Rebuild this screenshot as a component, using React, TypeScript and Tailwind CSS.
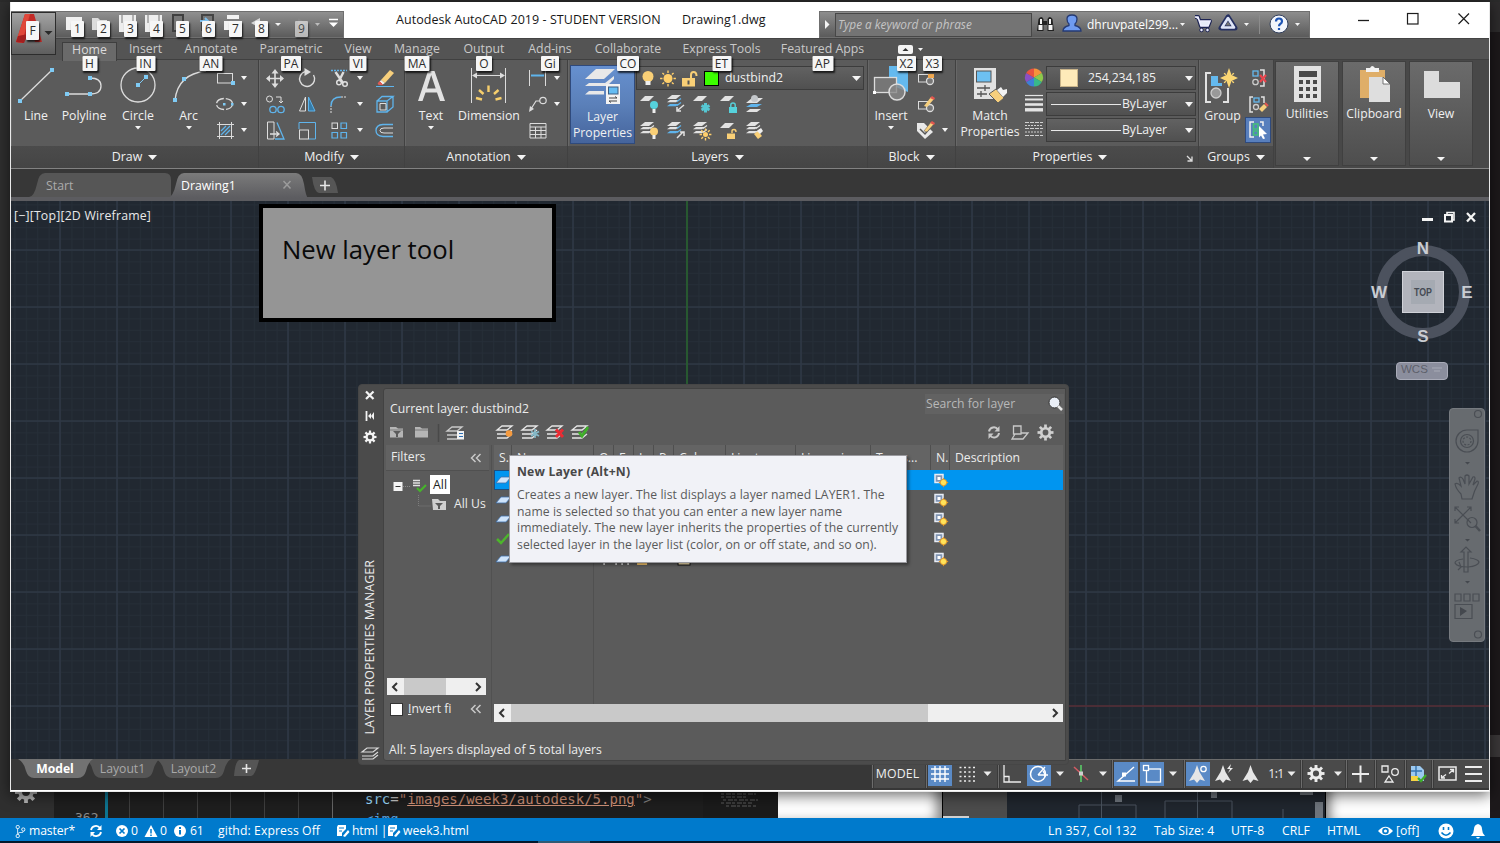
import React from "react";
import { VscSourceControl } from "react-icons/vsc";

type Kids = { children?: React.ReactNode };

/* Drawing area; `b` is the viewBox and also sets the rendered size. */
function Art({ b, className = "", children }: Kids & { b: string; className?: string }) {
  const [, , w, h] = b.split(" ");
  return (
    <svg viewBox={b} width={w} height={h} fill="none" className={"block shrink-0 " + className}>
      {children}
    </svg>
  );
}

function Caret({ w = 10, h = 5, fill = "#f4f4f4", className = "" }: { w?: number; h?: number; fill?: string; className?: string }) {
  return (
    <svg width={w} height={h} viewBox="0 0 10 5" preserveAspectRatio="none" className={"block shrink-0 " + className}>
      <path d="M0 0H10L5 5Z" fill={fill} />
    </svg>
  );
}

function CaretCell({ w = "w-[14px]" }: { w?: string }) {
  return (
    <span className={"flex h-[26px] shrink-0 items-center justify-center " + w}>
      <Caret w={6} h={4} />
    </span>
  );
}

function Key({ children, className = "" }: Kids & { className?: string }) {
  return (
    <span
      className={
        "absolute z-20 flex items-center justify-center rounded-[1px] bg-[#f6f6f6] text-[12px] leading-none text-[#2c2c2c] shadow-[1px_2px_2px_rgba(0,0,0,0.75)] " +
        className
      }
    >
      {children}
    </span>
  );
}

const sheet = (x: number, y: number, w = 9, s = 5, h = 5) => `M${x + s} ${y}h${w}l${-s} ${h}h${-w}z`;
const edge = (x: number, y: number, w = 9, s = 5, h = 5) => `M${x} ${y + h}h${w}l${s} ${-h}`;

function Stack({ x, y, low = "#e2e2e2" }: { x: number; y: number; low?: string }) {
  return (
    <g>
      <path d={sheet(x, y, 9, 5, 4)} fill="#e2e2e2" />
      <path d={sheet(x, y + 5, 9, 3, 2.3)} fill="#e2e2e2" />
      <path d={sheet(x, y + 9, 9, 3, 2.3)} fill={low} />
      <path d={`M${x + 10} ${y + 6.500}l4 -3M${x + 10} ${y + 10.500}l4 -3`} stroke={low} strokeWidth="1.2" />
    </g>
  );
}

function Sun({ x, y, r = 3.5, fill = "#ffcf6b" }: { x: number; y: number; r?: number; fill?: string }) {
  const a = r + 1;
  const c = r + 3.4;
  const k = 0.707;
  return (
    <g>
      <circle cx={x} cy={y} r={r} fill={fill} />
      <path
        stroke={fill}
        strokeWidth="1.4"
        d={`M${x} ${y - a}V${y - c}M${x} ${y + a}V${y + c}M${x - a} ${y}H${x - c}M${x + a} ${y}H${x + c}M${x - a * k} ${y - a * k}L${x - c * k} ${y - c * k}M${x + a * k} ${y - a * k}L${x + c * k} ${y - c * k}M${x - a * k} ${y + a * k}L${x - c * k} ${y + c * k}M${x + a * k} ${y + a * k}L${x + c * k} ${y + c * k}`}
      />
    </g>
  );
}

function Gear({ x, y, r, fill, hole }: { x: number; y: number; r: number; fill: string; hole: string }) {
  return (
    <g>
      <circle cx={x} cy={y} r={r * 0.7} fill={fill} />
      {[0, 45, 90, 135].map((d) => (
        <rect key={d} x={x - r * 0.17} y={y - r} width={r * 0.34} height={r * 2} fill={fill} transform={`rotate(${d} ${x} ${y})`} />
      ))}
      <circle cx={x} cy={y} r={r * 0.36} fill={hole} />
    </g>
  );
}

function Sq({ x, y }: { x: number; y: number }) {
  return <rect x={x - 2} y={y - 2} width="4" height="4" fill="#7fcbf5" />;
}

function Big({ b, label, caret = false, children }: Kids & { b: string; label: string; caret?: boolean }) {
  return (
    <div className="flex shrink-0 flex-col items-center">
      <Art b={b}>{children}</Art>
      <span className="-mx-3 h-[18px] text-[12.3px] leading-[19px] whitespace-nowrap">{label}</span>
      {caret && <Caret w={6} h={3.5} className="mt-[2px]" />}
    </div>
  );
}

function Panel({ w, title, corner = false, pad = "", inset = "pl-px", children }: Kids & { w: string; title: string; corner?: boolean; pad?: string; inset?: string }) {
  return (
    <section className={"flex shrink-0 flex-col border-r border-[#414141] shadow-[inset_1px_0_0_#676767] " + w}>
      <div className={"flex h-[86px] " + inset}>{children}</div>
      <div className={"relative flex h-[22px] items-center justify-center gap-[6px] bg-linear-to-b from-[#4b4b4b] to-[#454545] text-[12.4px] " + pad}>
        <span className="pt-px">{title}</span>
        <Caret w={9} h={5} />
        {corner && (
          <span className="absolute right-[5px] bottom-[6px]">
            <Art b="0 0 7 7">
              <path d="M1 1L5.5 5.5M6 1.5V6H1.5" stroke="#ddd" strokeWidth="1.3" />
            </Art>
          </span>
        )}
      </div>
    </section>
  );
}

function Collapsed({ label, children }: Kids & { label: string }) {
  return (
    <div className="mr-[3px] flex h-[105px] w-[64px] shrink-0 flex-col items-center border border-[#404040] bg-linear-to-b from-[#6b6b6b] to-[#4e4e4e]">
      {children}
      <span className="h-[18px] text-[12.2px] leading-[18px] whitespace-nowrap">{label}</span>
      <Caret w={8} h={4} className="mt-[34px]" />
    </div>
  );
}

const combo = "flex h-[24px] items-center border border-[#3c3c3c] bg-linear-to-b from-[#626262] to-[#505050]";

function TitleBar() {
  return (
    <header className="flex h-[36px] shrink-0 bg-white">
      <div className="mt-[9px] flex h-[27px] w-[333px] shrink-0 border border-[#6f6f6f] bg-linear-to-b from-[#909090] to-[#5c5c5c] pl-[50px]">
        <Art b="62 13 26 25"><path d="M66 18H82V31H66Z" fill="#f0f0f0" /></Art>
        <Art b="88 13 26 25"><path d="M92 19h6l2 2h7v10H92Z" fill="#dcdcdc" /></Art>
        <Art b="114 13 26 25"><path d="M119 16H136V33H119Z" fill="#ededed" /><path d="M122 16V24M133 16V24" stroke="#777" /></Art>
        <Art b="140 13 26 25"><path d="M145 16H162V33H145Z" fill="#ededed" /><path d="M148 16V24M159 16V24" stroke="#777" /></Art>
        <Art b="166 13 27 25"><path d="M173 16H183V32H173Z" fill="#777" stroke="#3f3f3f" strokeWidth="2" /></Art>
        <Art b="193 13 26 25"><path d="M202 16H213V31H202Z" fill="#777" stroke="#444" strokeWidth="2" /><path d="M200 22H208M205 19L208 22L205 25" stroke="#7dbfec" strokeWidth="2" /></Art>
        <Art b="219 13 26 25"><path d="M224 22H242V31H224ZM227 16H239V20H227Z" fill="#f2f2f2" /></Art>
        <Art b="245 13 26 25"><path d="M251 24L260 19V29Z" fill="#d8d8d8" /><path d="M259 24H264" stroke="#d8d8d8" strokeWidth="3" /></Art>
        <span className="flex w-[14px] items-center justify-center"><Caret w={6} h={3} /></span>
        <Art b="285 13 26 25"><path d="M306 24L298 19V29Z" fill="#858585" /></Art>
        <span className="flex w-[13px] items-center justify-center"><Caret w={5} h={3} fill="#bdbdbd" /></span>
        <Art b="324 13 18 25"><path d="M329 20.5H338" stroke="#fff" strokeWidth="1.5" /><path d="M329 23.5H338L333.5 28Z" fill="#fff" /></Art>
      </div>
      <div className="flex h-[36px] w-[475px] shrink-0 items-center pl-[52px] text-[12.5px] tracking-[0.05px] whitespace-pre text-[#171717]">
        <span className="w-[286px]">Autodesk AutoCAD 2019 - STUDENT VERSION</span>
        <span>Drawing1.dwg</span>
      </div>
      <div className="mt-[9px] flex h-[27px] w-[491px] shrink-0 items-center border border-[#6f6f6f] bg-linear-to-b from-[#8d8d8d] to-[#5b5b5b] text-[12px] text-white">
        <Art b="0 0 15 25"><path d="M5 8L9.500 12.500L5 17Z" fill="#f4f4f4" /></Art>
        <div className="flex h-[24px] w-[197px] items-center border border-[#474747] bg-[#747474] pl-[2px] text-[11.8px] text-[#c5c5c5] italic">
          Type a keyword or phrase
        </div>
        <Art b="1032 13 28 25">
          <path d="M1037 32l1.500-12q3-4 5 0v12zM1054 32l-1.500-12q-3-4-5 0v12zM1043 22h5v4h-5z" fill="#222" />
          <path d="M1038.500 26h4v5h-4zM1048.500 26h4v5h-4zM1040 20h2v5h-2zM1049 20h2v5h-2z" fill="#f2f2f2" />
        </Art>
        <Art b="1060 13 26 25">
          <path d="M1063 32q0-4 6-5.500v-1.500q-2-2-2-5q0-4 5-4t5 4q0 3-2 5v1.500q6 1.500 6 5.500z" fill="#6f9bf0" stroke="#253a73" strokeWidth="1.3" />
        </Art>
        <span className="w-[91px] pt-px pl-px">dhruvpatel299...</span>
        <span className="flex w-[11px] justify-center"><Caret w={5} h={3} /></span>
        <Art b="1192 13 28 25">
          <path d="M1199 18h3l3 9h7l2-5h-10" stroke="#1d2453" strokeWidth="4" strokeLinejoin="round" />
          <path d="M1199 18h3l3 9h7l2-5h-10" fill="#e6ebf7" stroke="#eef" strokeWidth="1.700" />
          <circle cx="1205.500" cy="31" r="1.800" fill="#eef" stroke="#1d2453" /><circle cx="1211.500" cy="31" r="1.800" fill="#eef" stroke="#1d2453" />
        </Art>
        <Art b="1220 13 24 25">
          <path d="M1232 18L1225 29H1239Z" stroke="#242f60" strokeWidth="5" strokeLinejoin="round" />
          <path d="M1232 19L1226 28.500H1238Z" stroke="#dfe5f7" strokeWidth="2.600" strokeLinejoin="round" />
        </Art>
        <span className="flex w-[12px] justify-center"><Caret w={5} h={3} /></span>
        <span className="mr-[9px] ml-[7px] h-[19px] w-px bg-[#8c8c8c]" />
        <Art b="1273 13 22 25">
          <circle cx="1283" cy="25" r="9" fill="#f2f5fb" stroke="#33415e" strokeWidth="1" />
          <path d="M1280 22.500q0-3 3-3t3 2.700q0 1.600-1.500 2.500t-1.500 2.500M1283 29v2" stroke="#1f55b5" strokeWidth="2.200" />
        </Art>
        <span className="flex w-[13px] justify-center"><Caret w={5} h={3} /></span>
      </div>
      <div className="flex h-[34px] flex-1 items-center pl-[27px]">
        <Art b="0 0 50 34"><path d="M21 18.500H32" stroke="#1d1d1d" strokeWidth="1.300" /></Art>
        <Art b="0 0 50 34"><rect x="20.500" y="11.500" width="10.500" height="10.500" stroke="#1d1d1d" strokeWidth="1.200" /></Art>
        <Art b="0 0 50 34"><path d="M21.500 11.500L32 22M32 11.500L21.500 22" stroke="#1d1d1d" strokeWidth="1.200" /></Art>
      </div>
    </header>
  );
}

const tabs: [string, string, string, string][] = [
  ["Home", "w-[55px]", "H", "w-[15px]"],
  ["Insert", "w-[57px]", "IN", "w-[19px]"],
  ["Annotate", "w-[74px]", "AN", "w-[23px]"],
  ["Parametric", "w-[86px]", "PA", "w-[20px]"],
  ["View", "w-[48px]", "VI", "w-[17px]"],
  ["Manage", "w-[70px]", "MA", "w-[25px]"],
  ["Output", "w-[64px]", "O", "w-[16px]"],
  ["Add-ins", "w-[68px]", "Gi", "w-[18px]"],
  ["Collaborate", "w-[88px]", "CO", "w-[22px]"],
  ["Express Tools", "w-[99px]", "ET", "w-[19px]"],
  ["Featured Apps", "w-[103px]", "AP", "w-[21px]"],
];

function RibbonTabs() {
  return (
    <nav className="flex h-[22px] shrink-0 border-t border-[#444] bg-[#545454] pl-[51px] text-[12.3px] text-[#c9c9c9]">
      {tabs.map(([name, w, key, kw], i) => (
        <div
          key={name}
          className={
            "relative flex shrink-0 items-center justify-center whitespace-nowrap " +
            w +
            (i === 0 ? " mt-[3px] h-[19px] border border-b-0 border-[#3e3e3e] bg-[#6a6a6a] pb-[4px] text-[#dadada]" : " border-b border-[#404040] pt-px")
          }
        >
          {name}
          <Key className={(i === 0 ? "top-[13px]" : "top-[17px]") + " left-1/2 h-[15px] -translate-x-1/2 " + kw}>{key}</Key>
        </div>
      ))}
      <div className="relative flex flex-1 items-center border-b border-[#404040] pl-[24px]">
        <Art b="0 0 15 9"><rect width="15" height="9" rx="2" fill="#f4f4f4" /><path d="M4.500 6H10.500L7.500 3Z" fill="#333" /></Art>
        <Caret w={5} h={3} className="ml-[5px]" />
        <Key className="top-[17px] left-[23px] h-[15px] w-[19px]">X2</Key>
        <Key className="top-[17px] left-[49px] h-[15px] w-[19px]">X3</Key>
      </div>
    </nav>
  );
}

function DrawPanel() {
  return (
    <Panel w="w-[248px]" title="Draw" inset="">
      <Big b="11 60 50 46" label="Line"><path d="M20 101L52 70" stroke="#dcdcdc" strokeWidth="1.300" /><Sq x={20} y={101} /><Sq x={52} y={70} /></Big>
      <Big b="61 60 46 46" label="Polyline"><path d="M67 94H90Q101 94 101 86Q101 78 90 78" stroke="#dcdcdc" strokeWidth="1.300" /><Sq x={67} y={94} /><Sq x={90} y={94} /><Sq x={90} y={78} /></Big>
      <Big b="107 60 62 46" label="Circle" caret><circle cx="138" cy="85" r="17" stroke="#dcdcdc" strokeWidth="1.300" /><path d="M138 85L146 77" stroke="#7fcbf5" /><Sq x={138} y={85} /><Sq x={146} y={77} /></Big>
      <Big b="169 60 39 46" label="Arc" caret><path d="M175 100Q178 74 206 71" stroke="#dcdcdc" strokeWidth="1.300" /><Sq x={175} y={100} /><Sq x={184} y={79} /></Big>
      <div className="ml-[4px] grid h-[83px] grid-cols-[26px_12px] content-start pt-[5px]">
        <Art b="212 65 26 26"><rect x="217.500" y="73.500" width="15" height="9.500" stroke="#dcdcdc" /><Sq x={233} y={83} /></Art><CaretCell w="w-[12px]" />
        <Art b="212 91 26 26"><ellipse cx="224.500" cy="104" rx="8" ry="5.500" stroke="#dcdcdc" strokeWidth="1.300" strokeDasharray="9 2" /><rect x="223" y="103" width="2.500" height="2.500" fill="#7fcbf5" /><rect x="231" y="103" width="2.500" height="2.500" fill="#7fcbf5" /></Art><CaretCell w="w-[12px]" />
        <Art b="212 117 26 26"><path d="M219.500 122V139M231.500 122V139M217 124.500H234M217 136.500H234" stroke="#dcdcdc" /><path d="M221 131L226 126M221 135L230 126M225 135L230 130" stroke="#5fb4ec" strokeWidth="1.300" /></Art><CaretCell w="w-[12px]" />
      </div>
    </Panel>
  );
}

function ModifyPanel() {
  const w = "#dedede";
  const bl = "#5fb4ec";
  return (
    <Panel w="w-[146px]" title="Modify" inset="">
      <div className="grid h-[83px] grid-cols-[32px_33px_29px_13px_28px] content-start pt-[5px]">
        <Art b="259 65 32 26"><path d="M275 71V86M267.500 78.500H282.500" stroke={w} strokeWidth="1.600" /><path d="M271.500 73.500L275 69L278.500 73.500ZM271.500 83.500L275 88L278.500 83.500ZM270 75L266 78.500L270 82ZM280 75L284 78.500L280 82Z" fill={w} /></Art>
        <Art b="291 65 33 26"><path d="M313.500 75A7.500 7.500 0 1 1 305 71.700" stroke={w} strokeWidth="1.400" /><path d="M304.500 68L311 72L304.500 76Z" fill={w} /></Art>
        <Art b="324 65 29 26"><path d="M331 70.500H347" stroke={bl} strokeDasharray="2 1" strokeWidth="1.300" /><path d="M335.500 72L343 83M343.500 72L339 81" stroke={w} strokeWidth="2.400" /><circle cx="339" cy="82.500" r="2.300" stroke={w} strokeWidth="1.500" /><circle cx="345" cy="84" r="2.300" stroke={w} strokeWidth="1.500" /></Art>
        <CaretCell w="w-[13px]" />
        <Art b="366 65 32 26"><path d="M376 86.500H394" stroke={bl} /><path d="M381 80L390 70L394 73L385 83Z" fill="#f7cf7c" /><path d="M381 80L385 83L382 85L378 84Z" fill="#f3efe9" /><path d="M378 84l1.500-2.500 3 3z" fill="#e25750" stroke="#e25750" /></Art>

        <Art b="259 91 32 26"><circle cx="269.500" cy="99" r="3" stroke={w} /><circle cx="273" cy="109.500" r="3.200" stroke={bl} strokeWidth="1.300" /><circle cx="281" cy="109.500" r="3.200" stroke={bl} strokeWidth="1.300" /><path d="M276 97H281V102M279 101L281 103L283 101" stroke={w} /></Art>
        <Art b="291 91 33 26"><path d="M305.500 97V111H299.500Z" stroke={w} /><path d="M308.500 97V111H315Z" fill="#367ca8" stroke={bl} /></Art>
        <Art b="324 91 29 26"><path d="M331 113V106" stroke={w} strokeDasharray="2 1" /><path d="M331 106Q331 97 341 97" stroke={bl} strokeWidth="1.400" /><path d="M341 97H347" stroke={w} strokeDasharray="2 1" /></Art>
        <CaretCell w="w-[13px]" />
        <Art b="366 91 32 26"><path d="M377 101H387V112H377ZM377 101L382 96.500H393L387 101M393 96.500V107L387 112" stroke={bl} strokeWidth="1.300" /><path d="M380 103.500H386V110H380Z" stroke={w} /></Art>

        <Art b="259 117 32 26"><path d="M267.500 122H274V139H267.500Z" stroke={w} /><path d="M277 122.500L284 139H275" stroke={bl} strokeWidth="1.300" /><path d="M270 134H278M276 131.500L279 134L276 136.500" stroke={w} strokeWidth="1.300" /></Art>
        <Art b="291 117 33 26"><path d="M299 129V122.500H315.500V139H309" stroke={bl} /><rect x="299.500" y="130" width="9" height="9" stroke={w} /></Art>
        <Art b="324 117 29 26"><rect x="332" y="123" width="5.500" height="5.500" stroke={w} /><path d="M341 123H346.500V128.500H341ZM332 132.500H337.500V138H332ZM341 132.500H346.500V138H341Z" stroke={bl} strokeWidth="1.200" /></Art>
        <CaretCell w="w-[13px]" />
        <Art b="366 117 32 26"><path d="M393 124.500H383Q376 125 376 130.500Q376 136 383 136.500H393" stroke={bl} strokeWidth="1.300" /><path d="M393 128H384Q380 128 380 130.500Q380 133 384 133H393" stroke={w} /></Art>
      </div>
    </Panel>
  );
}

function AnnotationPanel() {
  return (
    <Panel w="w-[163px]" title="Annotation">
      <Big b="406 60 50 46" label="Text" caret><path d="M418 101L428 71H434.500L445 101H440L437 92.500H425.500L422.500 101ZM427 88.500H435.700L431.200 75Z" fill="#e2e2e2" fillRule="evenodd" /></Big>
      <Big b="456 60 66 46" label="Dimension">
        <path d="M471.500 68V103M505.500 68V103M473 75.500H504" stroke="#dcdcdc" /><path d="M472 75.500L477 72.500V78.500ZM505 75.500L500 72.500V78.500Z" fill="#dcdcdc" />
        <path d="M476 98L482 99.500M479 90L483.500 94M488.500 85.500V92M498.500 90L494 94M501.500 98L495.500 99.500" stroke="#f7cf6c" strokeWidth="2.400" />
      </Big>
      <div className="ml-[3px] grid grid-cols-[26px_12px] content-start pt-[5px]">
        <Art b="525 65 26 26"><path d="M529.500 70V86M545.500 70V86" stroke="#dcdcdc" /><path d="M531 75.500H544" stroke="#5fb4ec" strokeWidth="2" /></Art><CaretCell w="w-[12px]" />
        <Art b="525 91 26 26"><circle cx="543" cy="100.500" r="3.200" stroke="#dcdcdc" strokeWidth="1.200" /><path d="M540 101H536L531 109" stroke="#dcdcdc" strokeWidth="1.200" /><path d="M529 112L530 106L534 109Z" fill="#dcdcdc" /></Art><CaretCell w="w-[12px]" />
        <Art b="525 117 26 26"><path d="M530 123.500H546V138H530ZM530 127H546M530 130.500H546M530 134.500H546M535.500 127V138M541 127V138" stroke="#dcdcdc" /></Art>
      </div>
    </Panel>
  );
}

function Lock({ x, y, fill }: { x: number; y: number; fill: string }) {
  return (
    <g>
      <rect x={x} y={y} width="8" height="6" fill={fill} />
      <path d={`M${x + 1.800} ${y}V${y - 2}q0-2 2.200-2t2.200 2V${y}`} stroke={fill} strokeWidth="1.400" />
    </g>
  );
}

function LayersPanel() {
  return (
    <Panel w="w-[300px]" title="Layers">
      <div className="mt-[5px] ml-px flex h-[79px] w-[65px] shrink-0 flex-col items-center border border-[#2f4a7c] bg-linear-to-b from-[#6690cf] via-[#5b80b9] to-[#45649c] text-[12.2px]">
        <Art b="570 65 64 42">
          <path d={sheet(584, 68, 19, 11, 10)} fill="#e8e8e8" />
          <path d="M588 82H604L613 75V78L606 85H584ZM588 90H603V93.500H584Z" fill="#e8e8e8" />
          <rect x="605" y="83" width="14" height="20" fill="#f2f2f2" /><rect x="607.500" y="86" width="9.500" height="7" fill="#64bcf2" stroke="#3c5b7e" />
          <path d="M608 97H616M614 95.500L616 97M616 100H608M610 101.500L608 100" stroke="#444" />
        </Art>
        <span className="h-[16px] leading-[17px]">Layer</span>
        <span className="h-[17px] leading-[17px]">Properties</span>
      </div>
      <div className="ml-px flex flex-col pt-[6px]">
        <div className={combo + " w-[228px] pr-[2px]"}>
          <Art b="638 66 72 23">
            <circle cx="649" cy="75.500" r="5.500" fill="#f9cf76" /><path d="M646.500 80H651.500V84H646.500Z" fill="#eee" />
            <Sun x={669} y={77.500} r={4.500} />
            <path d="M683 77H696V85.500H683Z" fill="#f9cf76" /><path d="M692 78V74Q692 71 694.500 71Q697.500 71 697.500 75" stroke="#f9cf76" strokeWidth="2" /><path d="M688.500 79.500H690.500V83.500H688.500Z" fill="#555" />
          </Art>
          <span className="-ml-[5px] size-[15px] border border-black bg-[#3cff00]" />
          <span className="ml-[6px] flex-1 text-[12.3px]">dustbind2</span>
          <Caret w={9} h={5} />
        </div>
        <div className="grid grid-cols-[26px_27px_26px_26px_26px] pt-[1px]">
          <Art b="636 91 26 26"><path d={sheet(640, 96)} fill="#e2e2e2" /><circle cx="654" cy="105" r="4" fill="#56d2dc" /><path d="M652.500 109H655.500V113H652.500Z" fill="#eee" /></Art>
          <Art b="662 91 27 26"><Stack x={667} y={95} low="#5fb4ec" /><path d="M684 105L678 110M677 107V111H681" stroke="#e2e2e2" strokeWidth="1.500" /></Art>
          <Art b="689 91 26 26"><path d={sheet(693, 96)} fill="#e2e2e2" /><path d="M705.500 103V112.500M701.500 105.500L709.500 110M709.500 105.500L701.500 110" stroke="#56c6d2" strokeWidth="3" /></Art>
          <Art b="715 91 26 26"><path d={sheet(720, 96)} fill="#e2e2e2" /><Lock x={729} y={107} fill="#56d2dc" /></Art>
          <Art b="741 91 26 26"><path d={sheet(746, 98, 11, 6, 5)} fill="#e2e2e2" /><path d={sheet(746, 104, 11, 5, 3)} fill="#5fb4ec" /><path d={sheet(746, 109, 11, 4, 3)} fill="#e2e2e2" /><circle cx="754.500" cy="98.500" r="3.500" fill="#c3c6ca" /></Art>
          <Art b="636 117 26 26"><Stack x={640} y={122} /><circle cx="654" cy="131.500" r="4" fill="#f9cf76" /><path d="M652.500 135H655.500V139H652.500Z" fill="#eee" /></Art>
          <Art b="662 117 27 26"><Stack x={667} y={122} low="#5fb4ec" /><path d="M677 138L683 132M680 132H684V136" stroke="#e2e2e2" strokeWidth="1.500" /></Art>
          <Art b="689 117 26 26"><Stack x={693} y={122} /><Sun x={705.500} y={134.500} r={2.500} /></Art>
          <Art b="715 117 26 26"><path d={sheet(720, 123)} fill="#e2e2e2" /><rect x="727" y="133.500" width="8" height="5.500" fill="#f9cf76" /><path d="M732 133V131Q732 129.500 734 129.500Q736 129.500 736 132" stroke="#f9cf76" strokeWidth="1.400" /></Art>
          <Art b="741 117 26 26"><Stack x={746} y={122} /><path d="M754 134L758 131L762 136L758 139Z" fill="#f9cf76" /><path d="M757 131L761 128L763 131L760 134Z" fill="#eee" /></Art>
        </div>
      </div>
    </Panel>
  );
}

function BlockPanel() {
  const shape = (y: number) => (
    <g><rect x="918.500" y={y} width="10" height="7.500" stroke="#dcdcdc" /><circle cx="930" cy={y + 6.500} r="3.500" stroke="#dcdcdc" strokeWidth="1.300" fill="#777" /></g>
  );
  return (
    <Panel w="w-[88px]" title="Block">
      <Big b="869 60 44 46" label="Insert" caret>
        <path d="M889 66H908V92L898 88L889 80Z" fill="#64b9ee" /><rect x="874.500" y="77.500" width="22" height="15" fill="#767676" stroke="#dcdcdc" strokeWidth="1.300" /><circle cx="897" cy="92" r="8" fill="#8a8a8a" fillOpacity="0.800" stroke="#dcdcdc" strokeWidth="1.500" /><rect x="873" y="91" width="3" height="3" fill="#fff" />
      </Big>
      <div className="grid grid-cols-[26px_12px] content-start pt-[5px]">
        <Art b="913 65 26 26">{shape(74.500)}<path d="M928 74H934V78H928Z" fill="#f0a850" /></Art><span />
        <Art b="913 91 26 26">{shape(101.500)}<path d="M924 106L931 97L934 99L927 107Z" fill="#f7cf7c" /><path d="M930 98L932 96L935 98L934 100Z" fill="#e25750" /></Art><span />
        <Art b="913 117 26 26"><path d="M917 123H924L933 132L925 139L917 131Z" fill="#e8e8e8" /><path d="M920 129L925 134L931 127" stroke="#555" strokeWidth="1.500" /><path d="M924 131L931 122L934 124L927 132Z" fill="#f7cf7c" stroke="#555" strokeWidth="0.500" /><path d="M930 123L932 121L935 123L934 125Z" fill="#e25750" /></Art><CaretCell w="w-[12px]" />
      </div>
    </Panel>
  );
}

function PropertiesPanel() {
  const wheel = ["#f6933b", "#8cc84b", "#38b88a", "#3e7fd6", "#8a4fc4", "#e9533f"];
  return (
    <Panel w="w-[243px]" title="Properties" corner pad="pr-[14px]">
      <div className="flex w-[66px] shrink-0 flex-col items-center text-[12.2px]">
        <Art b="957 60 66 46">
          <rect x="974" y="68" width="22" height="31" fill="#e2e2e2" /><rect x="976.500" y="71" width="14.500" height="11" fill="#6dc0f2" stroke="#555" />
          <path d="M977 88H990M977 94H987M985 85V91M981 91V97" stroke="#555" strokeWidth="1.300" />
          <path d="M989 94L996 89L1004 98L998 103Z" fill="#f7cf7c" stroke="#5b5b5b" /><path d="M997 90L1001 87L1003 90L1007 89V93L1003 97Z" fill="#f2f2f2" />
        </Art>
        <span className="h-[17px] leading-[19px]">Match</span>
        <span className="h-[17px] leading-[17px]">Properties</span>
      </div>
      <div className="grid w-[23px] shrink-0 content-start pt-[6px]">
        <Art b="1023 66 23 25">
          {wheel.map((c, i) => (
            <path key={c} d="M1034 77.500L1034 68.500A9 9 0 0 1 1041.800 73Z" fill={c} transform={`rotate(${i * 60} 1034 77.500)`} />
          ))}
        </Art>
        <Art b="1023 91 23 26"><path d="M1025 95.500H1043" stroke="#e4e4e4" strokeWidth="1.200" /><path d="M1025 99.500H1043" stroke="#e4e4e4" strokeWidth="2" /><path d="M1025 104.500H1043" stroke="#e4e4e4" strokeWidth="2.600" /><path d="M1025 109.800H1043" stroke="#e4e4e4" strokeWidth="3.400" /></Art>
        <Art b="1023 117 23 26"><path d="M1025 122.500H1043M1025 128.500H1043M1025 135.500H1043" stroke="#d0d0d0" strokeDasharray="4 1" strokeWidth="1.200" /><path d="M1025 125.500H1043M1025 132H1043" stroke="#d0d0d0" strokeDasharray="2 1" /></Art>
      </div>
      <div className="grid w-[150px] content-start gap-[2px] pt-[6px] text-[12.2px]">
        <div className={combo + " pr-[2px]"}>
          <span className="ml-[13px] size-[18px] border border-[#c9b48a] bg-[#feeab9]" />
          <span className="ml-[10px] flex-1 tracking-[-0.1px]">254,234,185</span>
          <Caret w={8} h={5} />
        </div>
        {[0, 1].map((i) => (
          <div key={i} className={combo + " pr-[2px]"}>
            <span className="ml-[4px] h-px w-[70px] bg-[#e8e8e8]" />
            <span className="ml-px flex-1">ByLayer</span>
            <Caret w={8} h={5} />
          </div>
        ))}
      </div>
    </Panel>
  );
}

function GroupsPanel() {
  return (
    <Panel w="w-[75px]" title="Groups">
      <Big b="1200 60 45 46" label="Group">
        <path d="M1211 73H1206V102H1211M1223 102H1228V88" stroke="#e2e2e2" strokeWidth="2" /><path d="M1211 76H1218V83H1222V86H1211Z" fill="#64b9ee" /><circle cx="1216" cy="93" r="5" fill="#999" stroke="#ccc" strokeWidth="1.300" />
        <path d="M1229 68L1231.500 75L1238 78L1231.500 81L1229 88L1226.500 81L1220 78L1226.500 75Z" fill="#fbd774" /><Sun x={1229} y={78} r={3.500} fill="#fbd774" />
      </Big>
      <div className="flex flex-col pt-[5px]">
        <Art b="1245 65 27 26"><path d="M1260 70H1264V86H1260" stroke="#e2e2e2" strokeWidth="1.500" /><rect x="1253" y="71" width="5" height="5" stroke="#64b9ee" strokeWidth="1.300" /><circle cx="1255.500" cy="82" r="2.700" stroke="#ccc" strokeWidth="1.300" /><path d="M1260 75L1266 82M1266 75L1260 82" stroke="#e8444c" strokeWidth="2.200" /></Art>
        <Art b="1245 91 27 26"><path d="M1253 97H1250V112H1253M1261 97H1264V103" stroke="#e2e2e2" strokeWidth="1.500" /><rect x="1254" y="98" width="5" height="4" stroke="#64b9ee" strokeWidth="1.300" /><circle cx="1256" cy="107" r="2.500" stroke="#ccc" strokeWidth="1.300" /><path d="M1259 109L1264 104L1267 107L1262 112Z" fill="#f7cf7c" /><path d="M1265 103L1268 106" stroke="#e25750" strokeWidth="2" /></Art>
        <div className="h-[26px] w-[26px] border border-[#2f4a7c] bg-[#587fbd]">
          <Art b="1246 118 24 24"><path d="M1254 122H1250V137H1254M1260 122H1263V126" stroke="#f0f0f0" strokeWidth="1.500" /><path d="M1253.500 124H1258V129H1253.500ZM1253.500 131H1258V135H1253.500Z" stroke="#44c07a" strokeWidth="1.600" /><path d="M1259 126L1267 134L1263 134.500L1265 138.500L1263 139L1261 135.500L1259 137.500Z" fill="#fff" /></Art>
        </div>
      </div>
    </Panel>
  );
}

function Ribbon() {
  return (
    <div className="flex h-[109px] shrink-0 border-b border-[#828282] bg-[#5b5b5b] text-[#f0f0f0]">
      <DrawPanel />
      <ModifyPanel />
      <AnnotationPanel />
      <LayersPanel />
      <BlockPanel />
      <PropertiesPanel />
      <GroupsPanel />
      <div className="flex flex-1 bg-[#484848] pt-[1px] pl-px">
        <Collapsed label="Utilities">
          <Art b="1276 61 62 43"><rect x="1294" y="65" width="27" height="36" fill="#e2e2e2" /><path d="M1299 70H1317V76H1299ZM1299 79h4v4h-4zM1306 79h4v4h-4zM1313 79h4v4h-4zM1299 86h4v4h-4zM1306 86h4v4h-4zM1313 86h4v4h-4zM1299 93h4v4h-4zM1306 93h4v4h-4zM1313 93h4v4h-4z" fill="#4a4a4a" /></Art>
        </Collapsed>
        <Collapsed label="Clipboard">
          <Art b="1343 61 62 43"><path d="M1360 69H1385V97H1360Z" fill="#dfae68" /><path d="M1366 67H1370Q1372 63 1375 67H1379V71H1366Z" fill="#f2f2f2" /><path d="M1369 76H1383L1390 83V101H1369Z" fill="#dedede" /><path d="M1383 76V83H1390Z" fill="#fff" stroke="#555" strokeWidth="0.800" /></Art>
        </Collapsed>
        <Collapsed label="View">
          <Art b="1410 61 62 43"><path d="M1424 70H1439V81H1460V97H1424Z" fill="#dcdcdc" /></Art>
        </Collapsed>
      </div>
    </div>
  );
}

function FileTabs() {
  return (
    <div className="flex h-[32px] shrink-0 border-b-[4px] border-[#5c5c60] bg-[#373737] pl-[18px] text-[12.3px]">
      <div className="relative mt-[3px] h-[25px] w-[142px]">
        <Art b="0 0 142 25" className="absolute inset-0"><path d="M0 25Q5 25 8 12Q10 1 16 1H136Q142 1 142 8V25Z" fill="#565656" /></Art>
        <span className="relative block pt-[5px] pl-[17px] text-[#ababab]">Start</span>
      </div>
      <div className="relative -ml-[3px] mt-[3px] h-[26px] w-[140px]">
        <Art b="0 0 140 26" className="absolute inset-0">
          <defs><linearGradient id="tab" x1="0" y1="0" x2="0" y2="1"><stop offset="0" stopColor="#7b7b7b" /><stop offset="1" stopColor="#5c5c60" /></linearGradient></defs>
          <path d="M0 26Q5 25 8 12Q10 1 16 1H128Q134 1 136 12Q138 25 140 26Z" fill="url(#tab)" />
          <path d="M115.500 9L122.500 16.500M122.500 9L115.500 16.500" stroke="#9c9c9c" strokeWidth="1.500" />
        </Art>
        <span className="relative block pt-[5px] pl-[13px] text-white">Drawing1</span>
      </div>
      <div className="mt-[8px] ml-[4px]">
        <Art b="0 0 26 16"><path d="M0 0H19Q24 2 26 16H7Q2 15 0 0Z" fill="#565656" /><path d="M8 8.500H18M13 3.500V13.500" stroke="#e6e6e6" strokeWidth="1.600" /></Art>
      </div>
    </div>
  );
}

function ViewCube() {
  return (
    <div className="absolute top-[38px] right-[14px]">
      <Art b="1369 239 106 108">
        <circle cx="1423" cy="292" r="41.500" stroke="#4c525e" strokeWidth="11" />
        <rect x="1402.500" y="271.500" width="41" height="41" fill="#b2b4bc" stroke="#d0d2d8" />
        <rect x="1411" y="280" width="24" height="24" fill="#a5aab2" />
        <g fill="#c9ccd2" fontFamily="Liberation Sans, sans-serif" fontWeight="bold" fontSize="17" textAnchor="middle">
          <text x="1423" y="253.500">N</text><text x="1423" y="342">S</text><text x="1379" y="298">W</text><text x="1467" y="298">E</text>
          <text x="1423" y="296" fontSize="10.500" fill="#454b54" textLength="18" lengthAdjust="spacingAndGlyphs">TOP</text>
        </g>
      </Art>
      <div className="mt-[15px] ml-[27px] flex h-[18px] w-[52px] items-center justify-between rounded-[4px] border border-[#a9abb8] bg-[#8b8e9d] pr-[5px] pl-[4px] pb-[2px] font-['Liberation_Sans',sans-serif] text-[11.5px] text-[#5d606b]">
        WCS
        <Art b="0 0 10 6"><path d="M0 1H10M2 4H8" stroke="#a7aab6" /></Art>
      </div>
    </div>
  );
}

function NavBar() {
  return (
    <div className="absolute top-[207px] right-[4px] h-[234px] w-[36px] rounded-[4px] border border-[#777b80] bg-[#676b6f]">
      <Art b="1450 409 34 232">
        <g stroke="#4a4e54" strokeWidth="1.200">
          <circle cx="1478" cy="414" r="3.500" /><circle cx="1478" cy="634.500" r="3.500" />
          <path d="M1467 430H1478V441A11 11 0 1 1 1467 430Z" /><circle cx="1467" cy="441" r="6.500" /><circle cx="1467" cy="441" r="4" strokeDasharray="2 1.500" />
          <path d="M1461 494Q1456 489 1455 484Q1457 482 1461 486L1459 478Q1461 476 1463 479L1465 484L1465 476Q1467 474 1469 476L1469 484L1473 477Q1475 476 1475 479L1473 485L1477 481Q1479 481 1478 484Q1474 491 1472 499H1462Z" />
          <path d="M1455 507L1471 523M1471 507L1455 523M1455 511V507H1459M1467 507H1471V511M1455 519V523H1459" /><circle cx="1472" cy="522.500" r="5" /><path d="M1475.500 526L1480 531" strokeWidth="2.500" />
          <path d="M1464 572V552H1461L1466 547L1471 552H1468V572Z" /><path d="M1463 559Q1455 560 1455 563Q1457 567 1468 567Q1478 566 1479 562Q1478 559 1470 558M1459 562L1461 567L1458 570" />
          <path d="M1455 594h6v7h-6zM1464 594h6v7h-6zM1473 594h6v7h-6zM1455 604.500h17v14h-17z" />
        </g>
        <path d="M1465 462H1470L1467.500 464.500ZM1465 539H1470L1467.500 541.500ZM1465 581H1470L1467.500 583.500ZM1460 607L1467 611L1460 616Z" fill="#44484e" />
      </Art>
    </div>
  );
}

const toolIcon = (x: number, mark: React.ReactNode) => (
  <Art b={`${x} 421 25 24`} key={x}>
    <path d={sheet(x + 5, 426, 10, 5, 4)} stroke="#e6e6e6" strokeWidth="1.300" />
    <path d={edge(x + 5, 430, 10, 5, 4) + edge(x + 5, 434, 10, 5, 4)} stroke="#e6e6e6" strokeWidth="1.300" />
    {mark}
  </Art>
);

const cols: [string, string][] = [
  ["w-[18px] pl-[4px]", "S."],
  ["w-[82px]", "Name"],
  ["w-[20px]", "O."],
  ["w-[20px]", "F.."],
  ["w-[20px]", "L."],
  ["w-[20px]", "P."],
  ["w-[52px]", "Color"],
  ["w-[70px]", "Linetype"],
  ["w-[75px]", "Lineweig..."],
  ["w-[60px]", "Trans..."],
  ["w-[19px]", "N."],
  ["w-[112px] border-r-0", "Description"],
];

function Scroll({ thumb, className }: { thumb: string; className: string }) {
  return (
    <div className={"flex items-center bg-[#efefef] " + className}>
      <Art b="0 0 17 16"><path d="M10 4L6 8L10 12" stroke="#333" strokeWidth="2" /></Art>
      <span className={"h-full bg-[#c9c9c9] " + thumb} />
      <span className="flex-1" />
      <Art b="0 0 17 16"><path d="M7 4L11 8L7 12" stroke="#333" strokeWidth="2" /></Art>
    </div>
  );
}

function Chevrons() {
  return <Art b="0 0 12 10"><path d="M5.500 1L1.500 5L5.500 9M10.500 1L6.500 5L10.500 9" stroke="#c9c9c9" strokeWidth="1.500" /></Art>;
}

function LayerPalette() {
  return (
    <div className="absolute top-[183px] left-[347px] z-30 flex h-[381px] w-[711px] rounded-[4px] border border-[#464646] bg-[#4b4b4b] text-[12.2px] text-[#ececec]">
      <div className="flex w-[24px] shrink-0 flex-col">
        <Art b="359 385 24 64">
          <path d="M366 391.500L373.500 399M373.500 391.500L366 399" stroke="#f4f4f4" strokeWidth="2.200" />
          <path d="M366.500 411V421" stroke="#f4f4f4" strokeWidth="1.800" /><path d="M368 416L371 413V419Z" fill="#f4f4f4" /><path d="M374 412V420L371 416Z" fill="#f4f4f4" />
          <Gear x={370} y={437} r={6.500} fill="#f4f4f4" hole="#4b4b4b" />
        </Art>
        <div className="flex h-[290px] w-[23px] items-center justify-start pt-[111px] [writing-mode:vertical-rl]">
          <span className="-ml-[2px] rotate-180 text-[12.4px] leading-[23px] tracking-[0.08px] whitespace-nowrap">LAYER PROPERTIES MANAGER</span>
        </div>
        <Art b="359 739 24 24"><path d={sheet(362, 748, 11, 5, 4) + edge(362, 752, 11, 5, 4) + edge(362, 755, 11, 5, 4)} stroke="#dcdcdc" strokeWidth="1.200" /></Art>
      </div>
      <div className="my-[3px] mr-[2px] flex flex-1 flex-col rounded-l-[3px] border border-[#424242] bg-[#5b5b5b]">
        <div className="flex h-[32px] shrink-0">
          <span className="flex-1 pt-[11px] pl-[6px] tracking-[0.02px]">Current layer: dustbind2</span>
          <div className="mt-[5px] mr-[1px] flex h-[20px] w-[139px] items-center justify-between bg-[#626262] pl-px text-[#b8b8b8]">
            <span className="pt-px">Search for layer</span>
            <Art b="0 0 16 16"><circle cx="6.500" cy="6.500" r="5.500" fill="#e9eef6" stroke="#333" /><path d="M10 10L14 14" stroke="#e8e8e8" strokeWidth="2.500" /></Art>
          </div>
        </div>
        <div className="flex h-[24px] shrink-0">
          <Art b="384 421 53 24">
            <path d="M390 427h6l2 1.500h5v9h-13z" fill="#b5b5b5" /><path d="M393 431h8l-3 3v3h-2v-3z" fill="#5b5b5b" /><path d="M415 427h5l2 1.500h6v9h-13z" fill="#b5b5b5" /><path d="M390 430H403M415 430H428" stroke="#7a7a7a" />
          </Art>
          <Art b="437 421 55 24">
            <path d="M438.500 424V442" stroke="#494949" strokeWidth="1.500" /><path d={sheet(447, 427, 10, 5, 4)} stroke="#c9c9c9" strokeWidth="1.300" /><path d="M447 435H457M447 439H457" stroke="#c9c9c9" strokeWidth="1.500" /><rect x="457" y="431" width="7" height="8.500" fill="#f1f1f1" /><path d="M459 433.500H463M459 436.500H463" stroke="#2d6fb5" strokeWidth="1.200" />
          </Art>
          {toolIcon(492, <circle cx="509" cy="433.500" r="3.300" fill="#f59a3e" />)}
          {toolIcon(517, <path d="M535 429V438M531 431.500L539 436M539 431.500L531 436" stroke="#84b9c8" strokeWidth="1.600" />)}
          {toolIcon(542, <path d="M556 429.500L563 437M563 429.500L556 437" stroke="#ea2a32" strokeWidth="3" />)}
          {toolIcon(567, <path d="M579 432L582 436L588 427" stroke="#3fae2a" strokeWidth="2.800" />)}
          <span className="flex-1" />
          <Art b="983 421 82 24">
            <path d="M989 431.500A5 5 0 0 1 998 429.500M999 433A5 5 0 0 1 990 435.500" stroke="#c9c9c9" strokeWidth="2" /><path d="M999.500 426V431.500H994.500ZM988.500 439V433.500H993.500Z" fill="#c9c9c9" />
            <path d="M1013.500 426H1021V434H1013.500ZM1021 433H1028L1023 439H1012L1015 434" stroke="#c9c9c9" strokeWidth="1.300" />
            <Gear x={1045.500} y={432.500} r={8} fill="#d0d0d0" hole="#5b5b5b" />
          </Art>
        </div>
        <div className="flex h-[278px] shrink-0 pl-[2px]">
          <div className="flex w-[103px] shrink-0 flex-col">
            <div className="flex h-[25px] shrink-0 items-center justify-between bg-[#626262] pr-[7px] pl-[5px]"><span>Filters</span><Chevrons /></div>
            <div className="flex h-[208px] shrink-0 flex-col overflow-hidden border-t border-[#505050] pt-[2px]">
              <div className="flex h-[22px] items-center">
                <Art b="386 472 44 22">
                  <rect x="393.500" y="481" width="9" height="9" fill="#f4f4f4" /><path d="M395.500 485.500H400.500" stroke="#333" /><path d="M403 485.500H411" stroke="#8a8a8a" strokeDasharray="1 1" />
                  <path d="M413 479.500H420M413 482H420M413 484.500H420" stroke="#e2e2e2" strokeWidth="1.500" /><path d="M417 487L420 490L426 484" stroke="#46b32b" strokeWidth="2.200" />
                </Art>
                <span className="h-[19px] bg-white px-[3px] text-[12.300px] leading-[19px] text-[#222]">All</span>
              </div>
              <div className="flex h-[19px] items-center">
                <Art b="386 494 67 19">
                  <path d="M418.500 494V505H431" stroke="#7d7d7d" strokeDasharray="1 1" /><path d="M432 498h6l2 2h6v9h-13z" fill="#cfcfcf" /><path d="M435 502h8l-3 3v3h-2v-3z" fill="#5b5b5b" />
                </Art>
                <span className="pl-px whitespace-nowrap">All Us</span>
              </div>
            </div>
            <Scroll className="ml-px h-[17px] w-[99px] shrink-0" thumb="w-[42px]" />
            <div className="flex h-[28px] items-center pl-[4px]">
              <span className="size-[13px] border border-[#333] bg-white" />
              <span className="ml-[5px] flex-1"><span className="underline">I</span>nvert fi</span>
              <span className="mr-[7px]"><Chevrons /></span>
            </div>
          </div>
          <div className="ml-[2px] flex w-[572px] flex-col border-l border-[#515151] pl-[2px]">
            <div className="flex h-[25px] shrink-0 bg-[#646464]">
              {cols.map(([w, t]) => (
                <span key={t} className={"flex shrink-0 items-center overflow-hidden border-r border-[#4f4f4f] pt-px pl-[5px] whitespace-nowrap " + w}>
                  {t}
                </span>
              ))}
            </div>
            <div className="flex h-[234px]">
              <div className="flex w-[100px] shrink-0 flex-col border-r border-[#505050]">
                {[0, 1, 2, 3, 4].map((i) => (
                  <div key={i} className={"h-[19.700px] shrink-0 " + (i === 0 ? "bg-[#0095f0] outline outline-1 -outline-offset-1 outline-[#1e4f80]" : "")}>
                    <Art b="0 0 20 19.700">
                      {i === 3 ? <path d="M3 10L7 14L15 5" stroke="#4db52c" strokeWidth="2.500" /> : <path d={sheet(2, 7, 10, 5, 6)} fill="#cfe4fb" stroke="#3f6fa8" strokeWidth="0.800" />}
                    </Art>
                  </div>
                ))}
              </div>
              <div className="flex flex-1 flex-col">
                {[0, 1, 2, 3, 4].map((i) => (
                  <div key={i} className={"flex h-[19.700px] shrink-0 " + (i === 0 ? "bg-[#0095f0]" : "")}>
                    <Art b="594 0 337 19.700">
                      {i === 4 && (
                        <>
                          <path d="M604 12V16M616 13V16M622 13V16M628 13V16" stroke="#dcdcdc" strokeWidth="1.500" />
                          <rect x="637" y="8" width="10" height="8" fill="#f5c56c" /><rect x="678" y="7" width="12" height="9" fill="#feeab9" stroke="#111" />
                        </>
                      )}
                    </Art>
                    <Art b="931 0 20 19.700">
                      <rect x="935" y="4.500" width="8" height="8" fill="#8296b4" stroke="#e8edf6" strokeWidth="1.500" />
                      <rect x="937.500" y="7" width="3" height="3" fill="#fff" />
                      <path d="M943.500 7.500L945 10.500L948.500 12.500L945 14.500L943.500 17.500L942 14.500L938.500 12.500L942 10.500Z" fill="#e89a28" /><circle cx="943.500" cy="12.500" r="3.200" fill="#ffe35a" stroke="#d9871e" strokeWidth="0.700" />
                    </Art>
                  </div>
                ))}
              </div>
            </div>
            <Scroll className="h-[18px] w-[569px] shrink-0" thumb="w-[417px]" />
          </div>
        </div>
        <span className="pt-[18px] pl-[5px] tracking-[0.03px]">All: 5 layers displayed of 5 total layers</span>
      </div>
      <div className="absolute top-[70px] left-[150px] z-40 h-[108px] w-[398px] border border-[#9a9a9f] bg-[#f1f2f7] pt-[8px] pl-[7px] text-[#5a5a5a] shadow-[2px_2px_3px_rgba(0,0,0,0.4)]">
        <div className="h-[23px] text-[12.2px] leading-[16px] font-bold tracking-[0.17px] text-[#484848]">New Layer (Alt+N)</div>
        <div className="text-[12.2px] leading-[16.500px] tracking-[0.07px] whitespace-nowrap">
          Creates a new layer. The list displays a layer named LAYER1. The
          <br />name is selected so that you can enter a new layer name
          <br />immediately. The new layer inherits the properties of the currently
          <br />selected layer in the layer list (color, on or off state, and so on).
        </div>
      </div>
    </div>
  );
}

function Canvas() {
  return (
    <main className="relative h-[558px] shrink-0 bg-[#212831]">
      <svg width="1478" height="558" viewBox="11 201 1478 558" className="block">
        <defs>
          <pattern id="minor" x="687" y="250" width="11.400" height="11.400" patternUnits="userSpaceOnUse"><path d="M0.500 0V11.400M0 0.500H11.400" stroke="#262e38" /></pattern>
          <pattern id="major" x="686" y="249" width="57" height="57" patternUnits="userSpaceOnUse"><path d="M1 0V57M0 1H57" stroke="#2e3744" strokeWidth="1.600" /></pattern>
        </defs>
        <rect x="11" y="201" width="1478" height="558" fill="url(#minor)" />
        <rect x="11" y="201" width="1478" height="558" fill="url(#major)" />
        <path d="M687 201V706" stroke="#267126" strokeWidth="1.200" />
        <path d="M687 706H1489" stroke="#6b262d" strokeWidth="1.200" />
      </svg>
      <span className="absolute top-[6px] left-[3px] text-[12.300px] tracking-[0.2px] text-[#e9e9e9]">[−][Top][2D Wireframe]</span>
      <div className="absolute top-[3px] left-[248px] h-[118px] w-[297px] border-[4px] border-black bg-[#959595] pt-[24px] pl-[19px] text-[25.700px] leading-[36px] text-[#0a0a0a]">
        New layer tool
      </div>
      <div className="absolute top-[8px] right-[10px]">
        <Art b="1419 209 60 16">
          <path d="M1422 219.500H1433" stroke="#f4f4f4" strokeWidth="3" /><path d="M1447 214V212.500H1454V220H1453" stroke="#f4f4f4" strokeWidth="1.600" /><rect x="1445" y="215" width="7" height="6.500" stroke="#f4f4f4" strokeWidth="2" /><path d="M1467 213L1475 221.500M1475 213L1467 221.500" stroke="#f4f4f4" strokeWidth="2.300" />
        </Art>
      </div>
      <ViewCube />
      <NavBar />
      <LayerPalette />
    </main>
  );
}

const on = "bg-[#5a8ac6]";
const sep = <span className="h-full w-[3px] shrink-0 border-x border-[#3a3a3a] bg-[#6c6c6c]" />;
const person = (x: number) => (
  <path d={`M${x} 765L${x + 2.500} 772L${x + 8} 781L${x + 3} 779.500L${x} 783L${x - 3} 779.500L${x - 8} 781L${x - 2.500} 772Z`} fill="#e6e6e6" />
);

function BottomBar() {
  const w = "#ececec";
  return (
    <footer className="flex h-[31px] shrink-0 bg-[#373737]">
      <div className="flex w-[860px] shrink-0 pl-[7px] text-[12.2px]">
        {["Model", "Layout1", "Layout2"].map((t, i) => (
          <div key={t} className={"relative h-[21px] " + (i === 0 ? "z-10 -mr-[7px] w-[74px]" : "-mr-[4px] w-[75px]")}>
            <Art b="0 0 75 20" className="absolute inset-0"><path d="M0 0H75Q70 3 68 12Q66 19 60 19H16Q10 19 8 12Q6 3 0 0Z" fill={i === 0 ? "#727272" : "#555"} /></Art>
            <span className={"relative block text-center leading-[19px] " + (i === 0 ? "font-bold text-white" : "text-[#a9a9a9]")}>{t}</span>
          </div>
        ))}
        <Art b="-6 0 34 20"><path d="M6 1H26Q22 17 18 17H1Q2 3 6 1Z" fill="#555" /><path d="M9 9.500H18M13.500 5V14" stroke="#e6e6e6" strokeWidth="1.600" /></Art>
      </div>
      <div className="flex h-[29px] flex-1 items-center border-t border-[#6c6c6c] bg-[#4a4a4a] text-[12.300px] text-[#efefef]">
        {sep}
        <span className="w-[51px] pr-[4px] text-center tracking-[0.15px]">MODEL</span>
        {sep}
        <Art b="928 762 24 24" className={on}><path d="M935 766V782M940 766V782M945 766V782M931 769H949M931 774H949M931 779H949" stroke="#fff" strokeWidth="1.400" /></Art>
        <Art b="952 762 45 24"><path d="M959.500 767.500H975M959.500 772H975M959.500 776.500H975M959.500 781H975" stroke={w} strokeWidth="1.700" strokeDasharray="2 2.500" /><path d="M983.500 771.500H991.500L987.500 776Z" fill={w} /></Art>
        {sep}
        <Art b="1000 762 27 24"><path d="M1004 765V782H1021M1004 776.500H1009V782" stroke={w} strokeWidth="1.300" /></Art>
        <Art b="1027 762 24 24" className={on}><circle cx="1038" cy="774" r="7.500" stroke="#fff" strokeWidth="1.500" /><path d="M1038 775H1048M1038 775L1045 767M1043 771Q1045 773 1045 777" stroke="#fff" strokeWidth="1.300" /></Art>
        <Art b="1051 762 60 24"><path d="M1056 771.500H1064L1060 776ZM1099 771.500H1107L1103 776Z" fill={w} /><path d="M1074 767L1088 780" stroke="#d55b64" strokeWidth="1.500" /><path d="M1081 765V782" stroke="#59c365" strokeWidth="1.700" /><path d="M1079 771.500H1083V775.500H1079Z" fill="#cfcfcf" /></Art>
        {sep}
        <Art b="1114 762 24 24" className={on}><path d="M1134 767L1118 781H1135" stroke="#fff" strokeWidth="1.400" /><rect x="1122" y="772.500" width="4" height="4" fill="#fff" /></Art>
        <span className="w-[2px]" />
        <Art b="1140 762 24 24" className={on}><rect x="1146.500" y="769" width="14" height="13" stroke="#fff" strokeWidth="1.300" /><rect x="1143.500" y="765.500" width="5" height="5" fill="#5a8ac6" stroke="#fff" strokeWidth="1.300" /></Art>
        <Art b="1164 762 19 24"><path d="M1169 771.500H1177L1173 776Z" fill={w} /></Art>
        {sep}
        <Art b="1186 762 24 24" className={on}>{person(1197)}<circle cx="1203.500" cy="769" r="2.700" stroke="#fff" strokeWidth="1.300" /></Art>
        <Art b="1210 762 56 24">{person(1223)}<path d="M1231 764L1227 769H1230L1228 773L1233 768H1230Z" fill={w} />{person(1250.500)}</Art>
        <span className="w-[20px] text-center tracking-[-0.6px]">1:1</span>
        <Art b="1286 762 14 24"><path d="M1287.500 771.500H1295.500L1291.500 776Z" fill={w} /></Art>
        {sep}
        <Art b="1303 762 42 24"><Gear x={1316} y={773.500} r={8.500} fill={w} hole="#4a4a4a" /><path d="M1334 771.500H1342L1338 776Z" fill={w} /></Art>
        {sep}
        <Art b="1348 762 26 24"><path d="M1352 774H1369M1360.500 765.500V782.500" stroke={w} strokeWidth="2" /></Art>
        {sep}
        <Art b="1377 762 27 24"><path d="M1382 766H1388V772H1382ZM1389 776L1393 782H1385Z" stroke={w} strokeWidth="1.300" /><circle cx="1395" cy="772" r="3.300" stroke={w} strokeWidth="1.300" /></Art>
        {sep}
        <Art b="1407 762 24 24"><path d="M1411 766H1420L1424 770V781H1411Z" fill="#9cc9f0" /><path d="M1411 771H1422M1416 766V778" stroke="#3777b3" strokeWidth="1.500" /><path d="M1411 776H1418V781H1411Z" fill="#f5d442" /><path d="M1418 778L1421 781L1426 775" stroke="#3fae2a" strokeWidth="2.200" /></Art>
        {sep}
        <Art b="1434 762 52 24"><rect x="1439" y="767" width="17" height="13" stroke={w} strokeWidth="1.500" /><path d="M1449 773.500L1453 770M1450 769.500H1453.500V772.500M1446 774.500L1442 777.500M1441.500 775V778H1445" stroke={w} strokeWidth="1.300" /><path d="M1465 767H1482M1465 774H1482M1465 781H1482" stroke={w} strokeWidth="2" /></Art>
      </div>
    </footer>
  );
}

function CadWindow() {
  return (
    <div className="absolute top-[2px] left-[10px] flex h-[790px] w-[1480px] flex-col border-x border-b border-[#e9e9e9] bg-white shadow-[0_3px_14px_rgba(0,0,0,0.6)]">
      <TitleBar />
      <RibbonTabs />
      <Ribbon />
      <FileTabs />
      <Canvas />
      <BottomBar />
      <div className="absolute top-[10px] left-0 z-10 flex h-[43px] w-[45px] border border-[#2c2c2c] bg-linear-to-b from-[#a3a3a3] to-[#5e5e5e]">
        <Art b="12 13 42 41">
          <path d="M25 14H34L42 42H35L30 22L23 43L16 42Z" fill="#c22a26" /><path d="M25 14H30L22 43L16 42Z" fill="#e0473a" /><path d="M18 36L28 34L24 43L16 42Z" fill="#a31f1f" /><path d="M44.500 31H52.500L48.500 35Z" fill="#2a2a2a" />
        </Art>
        <Key className="top-[8px] left-[14px] h-[19px] w-[13px] text-[12px]">F</Key>
      </div>
      <Key className="top-[19px] left-[60px] h-[16px] w-[13px]">1</Key>
      <Key className="top-[19px] left-[86px] h-[16px] w-[13px]">2</Key>
      <Key className="top-[19px] left-[113px] h-[16px] w-[13px]">3</Key>
      <Key className="top-[19px] left-[139px] h-[16px] w-[13px]">4</Key>
      <Key className="top-[19px] left-[165px] h-[16px] w-[13px]">5</Key>
      <Key className="top-[19px] left-[191px] h-[16px] w-[13px]">6</Key>
      <Key className="top-[19px] left-[218px] h-[16px] w-[13px]">7</Key>
      <Key className="top-[19px] left-[244px] h-[16px] w-[13px]">8</Key>
      <Key className="top-[19px] left-[284px] h-[16px] w-[13px] opacity-60">9</Key>
    </div>
  );
}

function EditorWindow() {
  return (
    <div className="flex h-full flex-col bg-[#2b2b2b]">
      <div className="h-[2px] shrink-0" />
      <div className="flex h-[816px] shrink-0 items-end overflow-hidden">
        <div className="flex h-full w-[54px] shrink-0 items-end bg-[#2f2f2f]">
          <Art b="0 778 54 40"><Gear x={26} y={792} r={11} fill="#b6b6b6" hole="#2f2f2f" /></Art>
        </div>
        <div className="flex h-[40px] w-[724px] shrink-0 items-end bg-[#1e1e1e]">
          <div className="h-[9px] w-[51px] pl-[21px] font-['DejaVu_Sans_Mono',monospace] text-[13px] leading-[18px] text-[#8a8a8a]">362</div>
          <span className="h-[26px] w-[3px] bg-[#0e7591]" />
          <Art b="108 792 255 26"><path d="M129.500 792V818M163.500 792V818M197.500 792V818M230.500 792V818M264.500 792V818M298.500 792V818" stroke="#3f3f3f" /><path d="M332.500 792V818" stroke="#666" /></Art>
          <div className="h-[26px] w-[340px] overflow-hidden pl-[2px] font-['DejaVu_Sans_Mono',monospace] text-[14px] leading-[19px] whitespace-pre text-[#c9c9c9]">
            <div className="-mt-[2px] h-[20px]"><span className="text-[#9cdcfe]">src</span>=<span className="text-[#ce9178]">"<span className="underline">images/week3/autodesk/5.png</span>"</span><span className="text-[#808080]">&gt;</span></div>
            <div className="text-[#569cd6]">&lt;img</div>
          </div>
          <Art b="703 792 75 26" className="bg-[#1b1b1b]"><path d="M721 794H756M721 797H748M723 800H758M721 803H752M726 806H756" stroke="#5c5c5c" strokeDasharray="3 2 5 1" /></Art>
        </div>
        <div className="h-[40px] w-[164px] shrink-0 bg-white shadow-[inset_-10px_0_12px_-4px_#888]" />
        <div className="flex h-[40px] w-[65px] shrink-0 flex-col justify-end border-l border-black bg-[#4c4c4c]"><span className="h-[2px] w-[26px] bg-[#d0d0d0]" /></div>
        <div className="flex h-[40px] w-[319px] shrink-0 items-end border-r border-black bg-[#20262e]">
          <Art b="1007 792 318 26"><path d="M1079 818V805H1136V818M1101.500 792V818M1165 818V801H1232V818M1197.500 792V818M1283 809V818" stroke="#4a535e" /><path d="M1115 795H1122V802H1115ZM1211 792H1217V798H1211ZM1300 792H1313V795H1300ZM1315 802H1323V818H1315Z" fill="#6e747c" /></Art>
        </div>
        <div className="h-[40px] w-[164px] shrink-0 bg-white shadow-[inset_10px_0_12px_-6px_#777]" />
        <div className="flex h-full flex-1 flex-col bg-[#1d191b]">
          <span className="h-[30px] bg-[#2e2c2d]" />
          <span className="mt-[703px] h-[22px] bg-[#3b3839]" />
        </div>
      </div>
      <div className="flex h-[23px] shrink-0 items-center bg-[#007acc] pt-[3px] pl-[14px] text-[12.200px] whitespace-nowrap text-white">
        <VscSourceControl className="size-[13px]" />
        <span className="ml-[2px] w-[60px] tracking-[-0.1px]">master*</span>
        <Art b="0 0 14 14"><path d="M2 6A5 5 0 0 1 11 4M12 8A5 5 0 0 1 3 10" stroke="#fff" strokeWidth="1.800" /><path d="M12.500 1V6H8ZM1.500 13V8H6Z" fill="#fff" /></Art>
        <span className="w-[12px]" />
        <Art b="0 0 14 14"><circle cx="7" cy="7" r="6" fill="#fff" /><path d="M4.500 4.500L9.500 9.500M9.500 4.500L4.500 9.500" stroke="#007acc" strokeWidth="1.700" /></Art>
        <span className="w-[15px] pl-[2px]">0</span>
        <Art b="0 0 14 14"><path d="M7 1L13.500 13H0.500Z" fill="#fff" /><path d="M7 5V9.500M7 10.500V12" stroke="#007acc" strokeWidth="1.500" /></Art>
        <span className="w-[15px] pl-[2px]">0</span>
        <Art b="0 0 14 14"><circle cx="7" cy="7" r="6" fill="#fff" /><path d="M7 6V10.500M7 3V5" stroke="#007acc" strokeWidth="2" /></Art>
        <span className="w-[31px] pl-[3px] tracking-[-0.1px]">61</span>
        <span className="w-[118px] tracking-[0.1px]">githd: Express Off</span>
        <Art b="0 0 14 14"><path d="M2 1H10V5L6 9V12H1V3Z" fill="#fff" /><path d="M3 4H8M3 7H6" stroke="#007acc" /><path d="M7 12L12 6L13.500 8L9 13Z" fill="#fff" /></Art>
        <span className="w-[37px] pl-[2px] tracking-[-0.1px]">html |</span>
        <Art b="0 0 14 14"><path d="M2 1H10V5L6 9V12H1V3Z" fill="#fff" /><path d="M3 4H8M3 7H6" stroke="#007acc" /><path d="M7 12L12 6L13.500 8L9 13Z" fill="#fff" /></Art>
        <span className="flex-1 pl-[2px]">week3.html</span>
        <span className="w-[106px] tracking-[0.15px]">Ln 357, Col 132</span>
        <span className="w-[77px] tracking-[0.05px]">Tab Size: 4</span>
        <span className="w-[51px] tracking-[0.1px]">UTF-8</span>
        <span className="w-[45px]">CRLF</span>
        <span className="w-[50px] tracking-[0.1px]">HTML</span>
        <Art b="0 0 17 14"><path d="M1 7Q8.500-1.500 16 7Q8.500 15.500 1 7Z" fill="#fff" /><circle cx="8.500" cy="7" r="3.300" fill="#007acc" /><circle cx="8.500" cy="7" r="1.600" fill="#fff" /></Art>
        <span className="w-[44px] pl-[2px]">[off]</span>
        <Art b="0 0 16 16"><circle cx="8" cy="8" r="7.500" fill="#fff" /><path d="M5.500 4V7M10.500 4V7M3.500 9.500Q8 15 12.500 9.500" stroke="#007acc" strokeWidth="1.600" /></Art>
        <span className="w-[16px]" />
        <Art b="0 0 16 16" className="mr-[14px]"><path d="M1 13Q4 10 4 6Q4 2 8 1Q12 2 12 6Q12 10 15 13ZM6 14H10Q8 17 6 14Z" fill="#fff" /></Art>
      </div>
      <div className="flex h-[2px] shrink-0 bg-[#02182c] pl-[538px]"><span className="h-full w-[52px] bg-[#2f5a73]" /></div>
    </div>
  );
}

export default function App() {
  return (
    <div className="relative h-[843px] w-[1500px] overflow-hidden font-['Open_Sans','Noto_Sans',sans-serif]">
      <EditorWindow />
      <CadWindow />
    </div>
  );
}
